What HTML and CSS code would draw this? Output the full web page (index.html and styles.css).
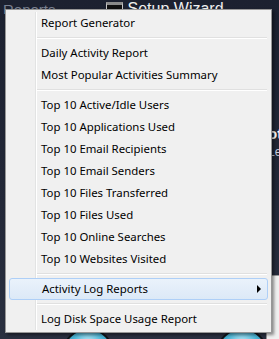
FILE: index.html
```html
<!DOCTYPE html>
<html lang="en">
<head>
	<meta charset="UTF-8">
	<title>Reports menu</title>
	<link rel="stylesheet" href="styles.css">
</head>
<body>
	<!--背景窗口-->
	<div class="desk">
		<div class="toolbar">
			<span class="tab">Reports</span>
			<span class="wizard"><span class="wicon"></span>Setup Wizard</span>
		</div>
		<div class="side-text">ot<br><span class="le">Le</span></div>
		<div class="ball ball1"></div>
		<div class="ball ball2"></div>
		<div class="submenu"></div>
	</div>

	<!--弹出菜单-->
	<div class="menu">
		<ul>
			<li>Report Generator</li>
			<li class="sep"></li>
			<li>Daily Activity Report</li>
			<li>Most Popular Activities Summary</li>
			<li class="sep"></li>
			<li>Top 10 Active/Idle Users</li>
			<li>Top 10 Applications Used</li>
			<li>Top 10 Email Recipients</li>
			<li>Top 10 Email Senders</li>
			<li>Top 10 Files Transferred</li>
			<li>Top 10 Files Used</li>
			<li>Top 10 Online Searches</li>
			<li>Top 10 Websites Visited</li>
			<li class="sep"></li>
			<li class="hover">Activity Log Reports<span class="arrow"></span></li>
			<li class="sep"></li>
			<li>Log Disk Space Usage Report</li>
		</ul>
	</div>
</body>
</html>
```
FILE: styles.css
```css
*{
	margin:0;
	padding:0;
}
ul li{
	list-style:none;
}
html,body{
	width:279px;
	height:339px;
	overflow:hidden;
}
body{
	font-family:"Noto Sans","Open Sans",sans-serif;
	font-size:11.4px;
	position:relative;
}

/* background app */
.desk{
	width:279px;
	height:339px;
	background:linear-gradient(180deg,#1c2130 0,#232838 60%,#2a3040 100%);
	position:relative;
	overflow:hidden;
}
.toolbar{
	height:14px;
	display:flex;
	align-items:flex-end;
	font-family:"Liberation Sans",sans-serif;
	font-size:16px;
	line-height:16px;
	overflow:hidden;
}
.tab{
	color:#7a8090;
	margin-left:3px;
	margin-bottom:-4px;
	font-size:15px;
}
.wizard{
	color:#f0f0f0;
	margin-left:50px;
	margin-bottom:-3px;
	display:flex;
	align-items:flex-end;
}
.wicon{
	width:15px;
	height:10px;
	border:1px solid #c8c8c8;
	border-top:3px solid #8a8a8a;
	background:#101010;
	margin-right:5px;
	margin-bottom:1px;
}
.side-text{
	position:absolute;
	left:268px;
	top:125px;
	width:11px;
	overflow:hidden;
	color:#fff;
	font-family:"Liberation Sans",sans-serif;
	font-size:15px;
	line-height:17px;
	font-weight:bold;
}
.side-text .le{
	font-weight:normal;
	font-size:12px;
	color:#c8d0e0;
}
.ball{
	position:absolute;
	width:48px;
	height:48px;
	border-radius:50%;
	background:radial-gradient(circle at 50% 30%,#cfeefa 0,#4fb8d8 35%,#1a7aa0 70%);
	border:2px solid #101418;
	top:328px;
}
.ball1{
	left:62px;
}
.ball2{
	left:216px;
}
.submenu{
	position:absolute;
	left:266px;
	top:275px;
	width:30px;
	height:80px;
	background:#f0f0f0;
	border:1px solid #979797;
}

/* popup menu */
.menu{
	position:absolute;
	left:5px;
	top:9px;
	width:261px;
	height:318px;
	padding:2px;
	background:#f0f0f0;
	border:1px solid #979797;
	box-shadow:2px 2px 3px rgba(0,0,0,0.45);
	color:#000;
}
.menu ul{
	position:relative;
}
.menu ul:before{
	content:"";
	position:absolute;
	left:27px;
	top:0;
	width:1px;
	height:318px;
	background:#e2e3e3;
	border-right:1px solid #fff;
}
.menu li{
	height:22px;
	line-height:21px;
	padding-left:33px;
	position:relative;
	white-space:nowrap;
}
.menu li.sep{
	height:8px;
	padding:0;
}
.menu li.sep:after{
	content:"";
	position:absolute;
	left:29px;
	right:2px;
	top:3px;
	height:1px;
	background:#e0e0e0;
	border-bottom:1px solid #fff;
}
.menu li.hover{
	margin:0 1px;
	padding-left:32px;
	border:1px solid #aecff7;
	border-radius:3px;
	height:20px;
	line-height:19px;
	background:linear-gradient(180deg,#eaf2fb 0,#dce9f7 100%);
}
.arrow{
	position:absolute;
	right:6px;
	top:6px;
	width:0;
	height:0;
	border-top:4px solid transparent;
	border-bottom:4px solid transparent;
	border-left:4px solid #000;
}
```
